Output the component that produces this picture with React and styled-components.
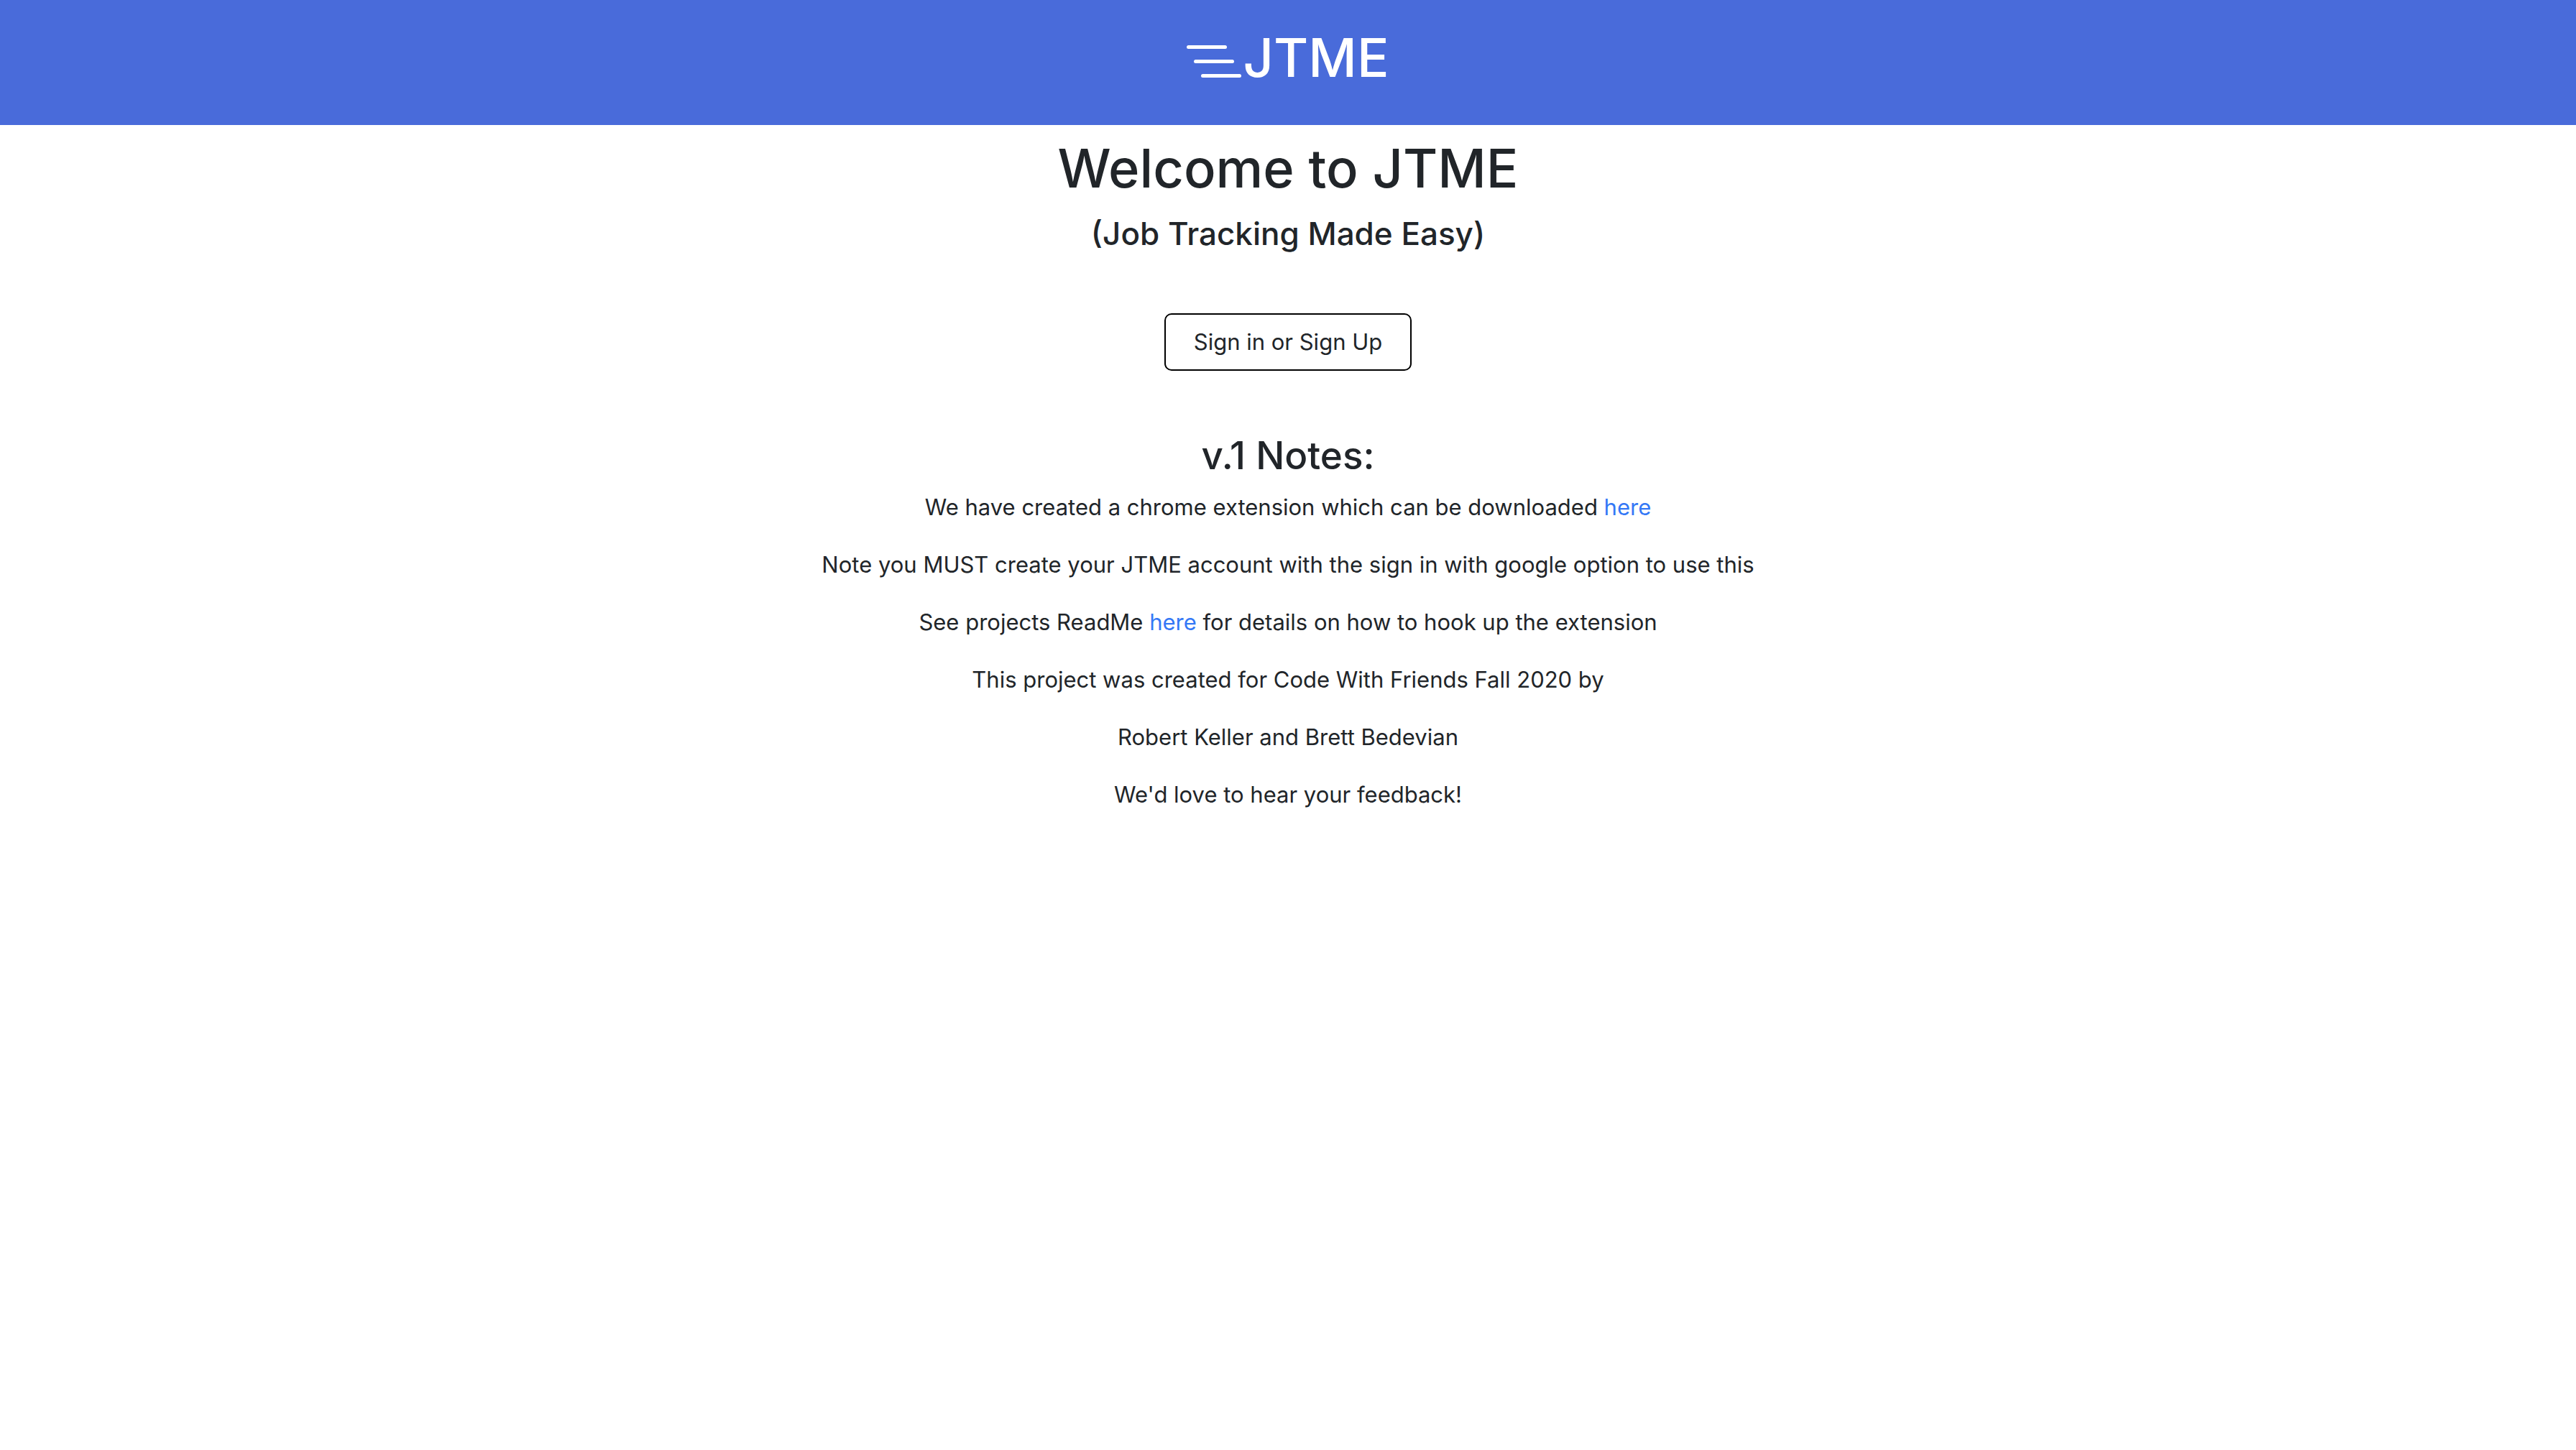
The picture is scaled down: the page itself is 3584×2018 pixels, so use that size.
import React from "react";
import styled, { createGlobalStyle } from "styled-components";

const GlobalStyle = createGlobalStyle`
  *, *::before, *::after { box-sizing: border-box; }
  body {
    margin: 0;
    background: #ffffff;
    color: #212529;
    font-family: Inter, Roboto, "Liberation Sans", sans-serif;
    font-size: 31px;
    line-height: 48px;
  }
`;

const Header = styled.header`
  display: flex;
  justify-content: center;
  padding: 32px 32px 46px;
  background: #496bda;
`;

const Brand = styled.a`
  display: flex;
  align-items: center;
  gap: 2px;
  color: #ffffff;
  font-size: 74px;
  font-weight: 500;
  line-height: 96px;
  text-decoration: none;
`;

const SpeedLines = styled.svg`
  display: block;
  width: 76px;
  height: 46px;
  margin-top: 12px;
`;

const Main = styled.main`
  display: flex;
  flex-direction: column;
  align-items: center;
  padding: 12px 32px 32px;
  text-align: center;
`;

const Title = styled.h1`
  margin: 0 0 14px;
  font-size: 74px;
  font-weight: 500;
  line-height: 96px;
`;

const Subtitle = styled.h2`
  margin: 0 0 82px;
  font-size: 44px;
  font-weight: 500;
  line-height: 58px;
`;

const SignInButton = styled.button`
  margin: 0 0 84px;
  padding: 14px 39px;
  border: 2px solid #000000;
  border-radius: 10px;
  background: transparent;
  color: inherit;
  font: inherit;
  cursor: pointer;
`;

const NotesHeading = styled.h2`
  margin: 0 0 14px;
  font-size: 53px;
  font-weight: 500;
  line-height: 68px;
`;

const Note = styled.p`
  margin: 0 0 32px;
`;

const NoteLink = styled.a`
  color: #3478f6;
  text-decoration: none;
`;

export default function App() {
  return (
    <>
      <GlobalStyle />
      <Header>
        <Brand href="#">
          <SpeedLines viewBox="0 0 76 46" aria-hidden="true">
            <rect x="0" y="0" width="56" height="5" rx="2.5" fill="#fff" />
            <rect x="10" y="20" width="56" height="5" rx="2.5" fill="#fff" />
            <rect x="20" y="40" width="56" height="5" rx="2.5" fill="#fff" />
          </SpeedLines>
          JTME
        </Brand>
      </Header>
      <Main>
        <Title>Welcome to JTME</Title>
        <Subtitle>(Job Tracking Made Easy)</Subtitle>
        <SignInButton type="button">Sign in or Sign Up</SignInButton>
        <NotesHeading>v.1 Notes:</NotesHeading>
        <Note>
          We have created a chrome extension which can be downloaded{" "}
          <NoteLink href="#">here</NoteLink>
        </Note>
        <Note>
          Note you MUST create your JTME account with the sign in with google
          option to use this
        </Note>
        <Note>
          See projects ReadMe <NoteLink href="#">here</NoteLink> for details on
          how to hook up the extension
        </Note>
        <Note>This project was created for Code With Friends Fall 2020 by</Note>
        <Note>Robert Keller and Brett Bedevian</Note>
        <Note>We'd love to hear your feedback!</Note>
      </Main>
    </>
  );
}
